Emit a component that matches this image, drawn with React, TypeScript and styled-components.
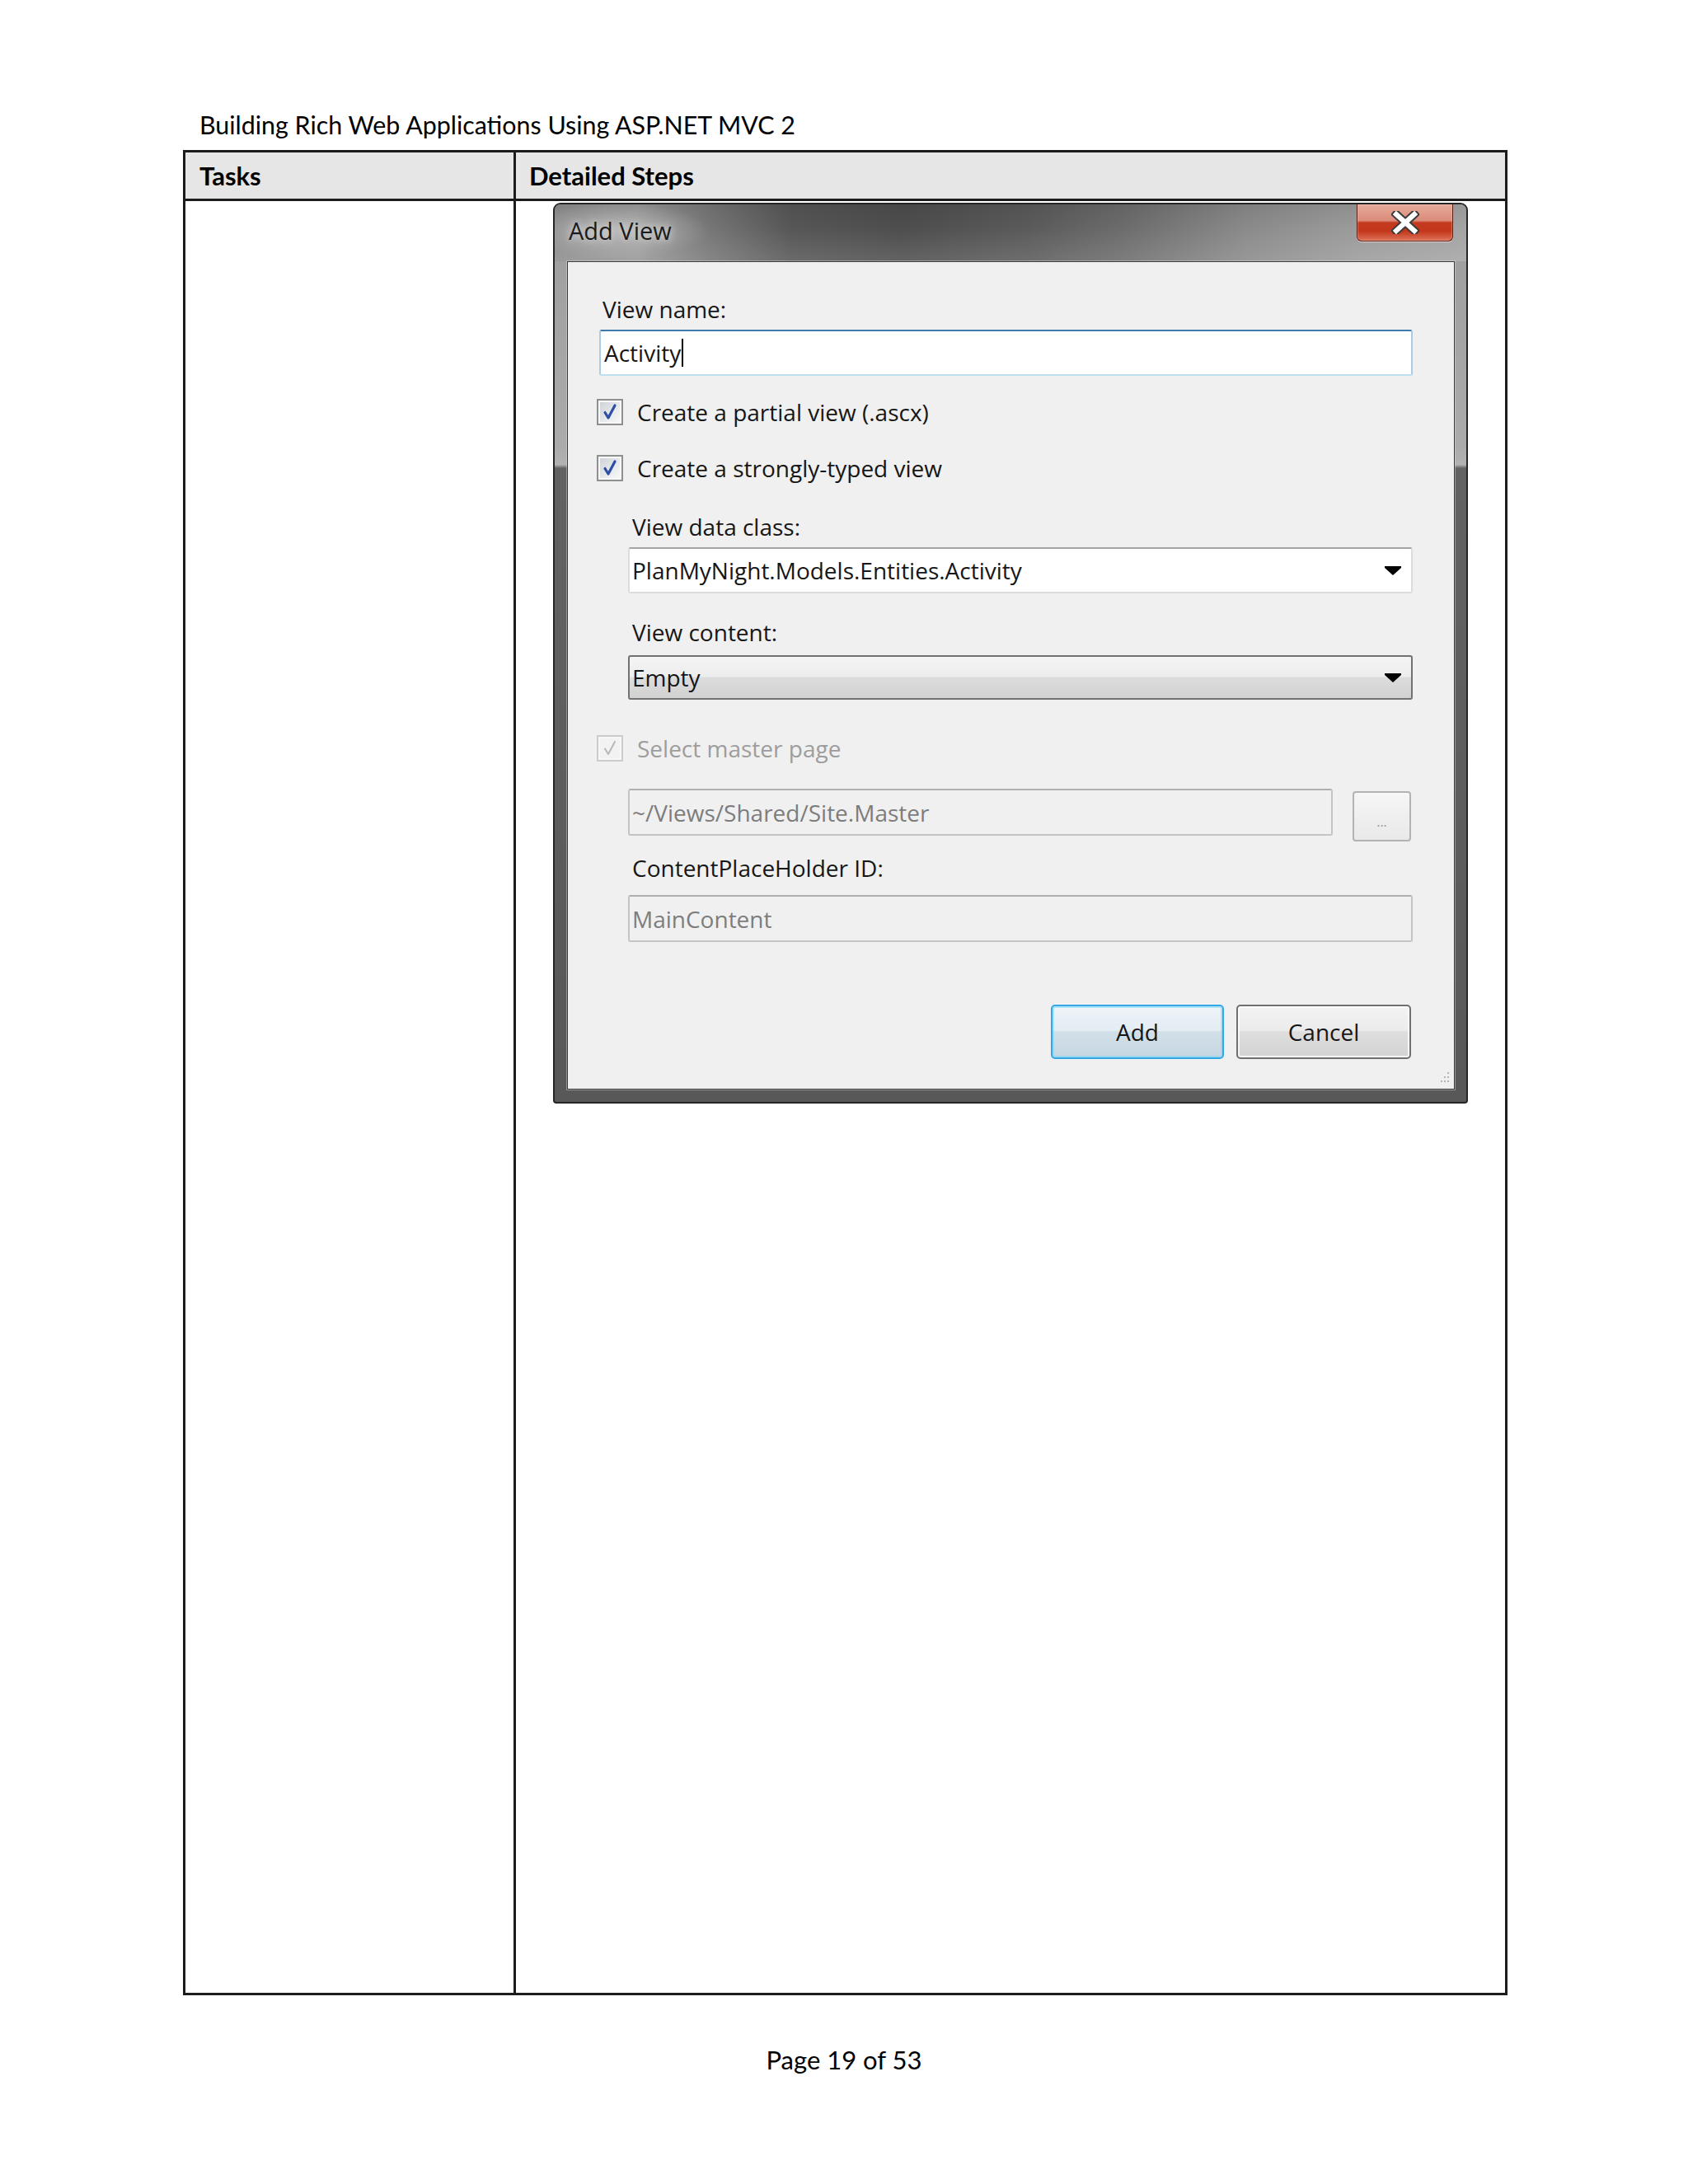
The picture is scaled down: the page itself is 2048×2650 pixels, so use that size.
import React from 'react';
import styled, { createGlobalStyle } from 'styled-components';

const GlobalStyle = createGlobalStyle`
  html, body {
    margin: 0;
    padding: 0;
    background: #ffffff;
  }
  body {
    font-family: Lato, "Liberation Sans", sans-serif;
    color: #000000;
  }
`;

const Page = styled.div`
  width: 2048px;
  min-height: 2650px;
  box-sizing: border-box;
  padding-top: 131px;
`;

const RunningHead = styled.div`
  margin-left: 242px;
  font-size: 30.4px;
  line-height: 40px;
  margin-bottom: 11px;
`;

const Table = styled.div`
  margin-left: 222px;
  width: 1607px;
  height: 2239px;
  box-sizing: border-box;
  border: 3px solid #1c1c1c;
  display: grid;
  grid-template-columns: 401px 1fr;
  grid-template-rows: 59px 1fr;
`;

const HeadCell = styled.div<{ $first?: boolean }>`
  background: #e6e6e6;
  border-bottom: 3px solid #1c1c1c;
  border-right: ${(p) => (p.$first ? '3px solid #1c1c1c' : 'none')};
  display: flex;
  align-items: center;
  padding-left: ${(p) => (p.$first ? '17px' : '16px')};
  font-weight: 700;
  font-size: 31px;
`;

const BodyCell = styled.div<{ $first?: boolean }>`
  border-right: ${(p) => (p.$first ? '3px solid #1c1c1c' : 'none')};
  padding: ${(p) => (p.$first ? '0' : '2px 0 0 45px')};
`;

const Footer = styled.div`
  margin-top: 58px;
  text-align: center;
  font-size: 31px;
  line-height: 40px;
`;

/* ---------- dialog ---------- */

const Window = styled.div`
  width: 1110px;
  box-sizing: border-box;
  border: 2px solid #262626;
  border-radius: 9px 9px 4px 4px;
  overflow: hidden;
  background: linear-gradient(
    180deg,
    #9c9c9c 0%,
    #ababab 27%,
    #b2b2b2 29%,
    #626262 29.4%,
    #585858 100%
  );
  font-family: "Open Sans", "Noto Sans", sans-serif;
  color: #161616;
`;

const TitleBar = styled.div`
  height: 69px;
  display: flex;
  align-items: flex-start;
  padding: 0 16px 0 17px;
  background:
    radial-gradient(ellipse 150px 45px at 75px 32px, rgba(190, 190, 190, 0.75), rgba(190, 190, 190, 0) 75%),
    linear-gradient(180deg, rgba(0, 0, 0, 0.08) 0%, rgba(255, 255, 255, 0) 40%, rgba(255, 255, 255, 0.12) 100%),
    linear-gradient(
      90deg,
      #8c8c8c 0%,
      #999999 9%,
      #767676 17%,
      #565656 26%,
      #4d4d4d 38%,
      #5a5a5a 52%,
      #6b6b6b 62%,
      #8a8a8a 76%,
      #9b9b9b 88%,
      #a4a4a4 100%
    );
`;

const Title = styled.div`
  margin-top: 15px;
  font-size: 29px;
  line-height: 34px;
  color: #1b1b1b;
  text-shadow: 0 0 8px rgba(225, 225, 225, 0.9), 0 0 16px rgba(225, 225, 225, 0.6);
`;

const CloseButton = styled.div`
  margin-left: auto;
  width: 117px;
  height: 45px;
  box-sizing: border-box;
  border: 1px solid #5a1d13;
  border-top: none;
  border-radius: 0 0 6px 6px;
  background: linear-gradient(
    180deg,
    #e6ab9d 0%,
    #dc8b79 45%,
    #c43a1f 50%,
    #c3371b 74%,
    #dd735b 100%
  );
  box-shadow: 0 1px 0 rgba(255, 230, 225, 0.7), inset 0 0 0 1px rgba(255, 200, 190, 0.35);
  display: flex;
  align-items: center;
  justify-content: center;
`;

const Frame = styled.div`
  padding: 0 14px 15px 15px;
`;

const Client = styled.div`
  position: relative;
  background: #f0f0f0;
  border: 1px solid #3a3a3a;
  box-shadow: 0 0 0 1px rgba(225, 225, 225, 0.45);
  padding: 0 50px 36px 37px;
`;

const Label = styled.div<{ $mt: number; $muted?: boolean }>`
  margin-top: ${(p) => p.$mt}px;
  padding-left: 5px;
  font-size: 28px;
  line-height: 34px;
  color: ${(p) => (p.$muted ? '#9b9b9b' : '#161616')};
`;

const Indent = styled.div`
  margin-left: 36px;
`;

const TextBox = styled.div<{ $mt: number }>`
  margin: ${(p) => p.$mt}px 0 0 1px;
  height: 56px;
  box-sizing: border-box;
  background: #ffffff;
  border-style: solid;
  border-width: 2px;
  border-color: #3f7aac #a9cde6 #c0dfee #a9cde6;
  border-radius: 3px;
  display: flex;
  align-items: center;
  padding-left: 4px;
  font-size: 28px;
`;

const Caret = styled.span`
  display: inline-block;
  width: 2px;
  height: 34px;
  background: #000000;
  margin-left: 1px;
`;

const CheckRow = styled.div<{ $mt: number; $disabled?: boolean }>`
  margin: ${(p) => p.$mt}px 0 0 -2px;
  height: 34px;
  display: flex;
  align-items: center;
  gap: 17px;
  font-size: 28px;
  color: ${(p) => (p.$disabled ? '#9d9d9d' : '#161616')};
`;

const Box = styled.span<{ $disabled?: boolean }>`
  width: 32px;
  height: 32px;
  box-sizing: border-box;
  border: 2px solid ${(p) => (p.$disabled ? '#cbcbcb' : '#8e8f8f')};
  padding: 2px;
  background: #f7f7f7;
  display: flex;
`;

const BoxInner = styled.span<{ $disabled?: boolean }>`
  flex: 1;
  background: ${(p) =>
    p.$disabled ? '#f2f2f2' : 'linear-gradient(135deg, #cfd3d8 0%, #e6e8ea 55%, #f7f7f7 100%)'};
  display: flex;
  align-items: center;
  justify-content: center;
`;

const Combo = styled.div<{ $mt: number; $button?: boolean }>`
  margin-top: ${(p) => p.$mt}px;
  height: ${(p) => (p.$button ? 54 : 56)}px;
  box-sizing: border-box;
  border: ${(p) => (p.$button ? '2px solid #727272' : '2px solid #dcdcdc')};
  border-top-color: ${(p) => (p.$button ? '#727272' : '#a4a4a4')};
  border-radius: 3px;
  background: ${(p) =>
    p.$button
      ? 'linear-gradient(180deg, #f4f4f4 0%, #ededed 48%, #dddddd 50%, #d1d1d1 100%)'
      : '#ffffff'};
  display: flex;
  align-items: center;
  padding: 0 12px 0 3px;
  font-size: 28px;
`;

const ComboText = styled.span`
  flex: 1;
`;

const MasterRow = styled.div`
  margin-top: 32px;
  display: flex;
  align-items: flex-start;
  gap: 24px;
  margin-right: 2px;
`;

const DisabledBox = styled.div<{ $mt?: number }>`
  flex: 1;
  margin-top: ${(p) => p.$mt ?? 0}px;
  height: 57px;
  box-sizing: border-box;
  border: 2px solid #c4c4c4;
  border-top-color: #afafaf;
  border-radius: 3px;
  background: #f0f0f0;
  display: flex;
  align-items: center;
  padding-left: 3px;
  font-size: 28px;
  color: #7d7d7d;
`;

const EllipsisButton = styled.div`
  margin-top: 3px;
  width: 71px;
  height: 61px;
  box-sizing: border-box;
  border: 2px solid #b3b3b3;
  border-radius: 4px;
  background: linear-gradient(180deg, #f6f6f6 0%, #efefef 50%, #e9e9e9 100%);
  display: flex;
  align-items: flex-end;
  justify-content: center;
  padding-bottom: 14px;
  font-size: 16px;
  line-height: 16px;
  color: #9a9a9a;
`;

const ButtonRow = styled.div`
  margin-top: 76px;
  display: flex;
  justify-content: flex-end;
  gap: 15px;
  margin-right: 2px;
`;

const PushButton = styled.div<{ $default?: boolean }>`
  width: ${(p) => (p.$default ? 210 : 212)}px;
  height: 66px;
  box-sizing: border-box;
  border: 2px solid ${(p) => (p.$default ? '#33a6e6' : '#707070')};
  border-radius: 5px;
  background: ${(p) =>
    p.$default
      ? 'linear-gradient(180deg, #eef4f8 0%, #e4edf3 47%, #d2dfe8 50%, #c7d7e2 100%)'
      : 'linear-gradient(180deg, #f3f3f3 0%, #ececec 47%, #dedede 50%, #d3d3d3 100%)'};
  box-shadow: ${(p) =>
    p.$default ? 'inset 0 0 0 2px rgba(120, 215, 250, 0.55)' : 'inset 0 0 0 2px rgba(255, 255, 255, 0.75)'};
  display: flex;
  align-items: center;
  justify-content: center;
  font-size: 28px;
  color: #161616;
`;

const Grip = styled.svg`
  position: absolute;
  right: 4px;
  bottom: 4px;
`;

function Check({ disabled }: { disabled?: boolean }) {
  return (
    <Box $disabled={disabled}>
      <BoxInner $disabled={disabled}>
        <svg width="22" height="22" viewBox="0 0 22 22">
          <path
            d="M5 11.5 L9 18 L17 3"
            fill="none"
            stroke={disabled ? '#b8b8b8' : '#2f4fa6'}
            strokeWidth={disabled ? 2 : 3.2}
            strokeLinejoin="round"
            strokeLinecap="round"
          />
        </svg>
      </BoxInner>
    </Box>
  );
}

function Arrow() {
  return (
    <svg width="20" height="11" viewBox="0 0 20 11">
      <path d="M0 0 H20 V2 L10 11 L0 2 Z" fill="#000000" />
    </svg>
  );
}

function AddViewDialog() {
  return (
    <Window>
      <TitleBar>
        <Title>Add View</Title>
        <CloseButton>
          <svg width="34" height="28" viewBox="0 0 34 28">
            <path d="M6 4 L28 24 M28 4 L6 24" stroke="#3b3b3b" strokeWidth="10" strokeLinecap="square" />
            <path d="M6 4 L28 24 M28 4 L6 24" stroke="#ffffff" strokeWidth="6" strokeLinecap="square" />
          </svg>
        </CloseButton>
      </TitleBar>
      <Frame>
        <Client>
          <Label $mt={40}>View name:</Label>
          <TextBox $mt={8}>
            Activity
            <Caret />
          </TextBox>
          <CheckRow $mt={27}>
            <Check />
            Create a partial view (.ascx)
          </CheckRow>
          <CheckRow $mt={34}>
            <Check />
            Create a strongly-typed view
          </CheckRow>
          <Indent>
            <Label $mt={37}>View data class:</Label>
            <Combo $mt={8}>
              <ComboText>PlanMyNight.Models.Entities.Activity</ComboText>
              <Arrow />
            </Combo>
            <Label $mt={30}>View content:</Label>
            <Combo $mt={11} $button>
              <ComboText>Empty</ComboText>
              <Arrow />
            </Combo>
          </Indent>
          <CheckRow $mt={42} $disabled>
            <Check disabled />
            Select master page
          </CheckRow>
          <Indent>
            <MasterRow>
              <DisabledBox>~/Views/Shared/Site.Master</DisabledBox>
              <EllipsisButton>...</EllipsisButton>
            </MasterRow>
            <Label $mt={15}>ContentPlaceHolder ID:</Label>
            <DisabledBox $mt={16}>MainContent</DisabledBox>
          </Indent>
          <ButtonRow>
            <PushButton $default>Add</PushButton>
            <PushButton>Cancel</PushButton>
          </ButtonRow>
          <Grip width="20" height="20" viewBox="0 0 20 20">
            <g fill="#b5b5b5">
              <rect x="16" y="4" width="2" height="2" />
              <rect x="12" y="9" width="2" height="2" />
              <rect x="16" y="9" width="2" height="2" />
              <rect x="8" y="14" width="2" height="2" />
              <rect x="12" y="14" width="2" height="2" />
              <rect x="16" y="14" width="2" height="2" />
            </g>
          </Grip>
        </Client>
      </Frame>
    </Window>
  );
}

export default function App() {
  return (
    <>
      <GlobalStyle />
      <Page>
        <RunningHead>Building Rich Web Applications Using ASP.NET MVC 2</RunningHead>
        <Table>
          <HeadCell $first>Tasks</HeadCell>
          <HeadCell>Detailed Steps</HeadCell>
          <BodyCell $first />
          <BodyCell>
            <AddViewDialog />
          </BodyCell>
        </Table>
        <Footer>Page 19 of 53</Footer>
      </Page>
    </>
  );
}
